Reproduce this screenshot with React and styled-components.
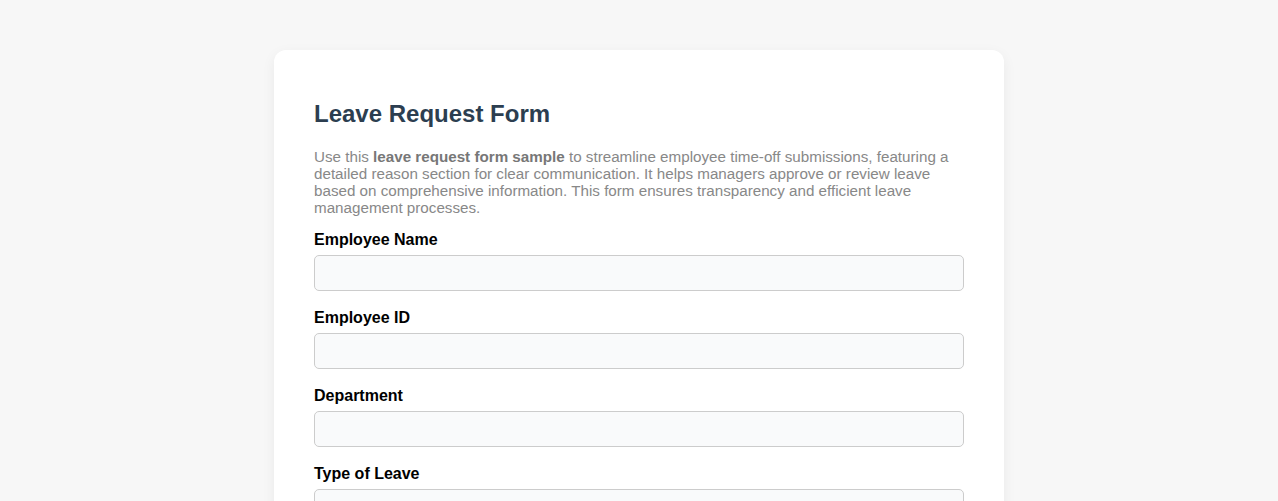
import React from "react";
import styled, { createGlobalStyle } from "styled-components";

const GlobalStyle = createGlobalStyle`
  body {
    margin: 0;
    background-color: #f7f7f7;
    font-family: "Liberation Sans", Arial, sans-serif;
  }
`;

function App() {
  return (
    <>
      <GlobalStyle />
      <Page>
        <FormCard>
          <FormTitle>Leave Request Form</FormTitle>
          <FormIntro>
            Use this <strong>leave request form sample</strong> to streamline
            employee time-off submissions, featuring a detailed reason section
            for clear communication. It helps managers approve or review leave
            based on comprehensive information. This form ensures transparency
            and efficient leave management processes.
          </FormIntro>

          <Field>
            <Label htmlFor="name">Employee Name</Label>
            <TextInput id="name" type="text" />
          </Field>
          <Field>
            <Label htmlFor="empid">Employee ID</Label>
            <TextInput id="empid" type="text" />
          </Field>
          <Field>
            <Label htmlFor="dept">Department</Label>
            <TextInput id="dept" type="text" />
          </Field>
          <Field>
            <Label htmlFor="type">Type of Leave</Label>
            <SelectInput id="type" defaultValue="">
              <option value=""></option>
              <option>Annual Leave</option>
              <option>Sick Leave</option>
              <option>Personal Leave</option>
            </SelectInput>
          </Field>
        </FormCard>
      </Page>
    </>
  );
}

export default App;

const Page = styled.div`
  padding: 50px 0 40px;
  display: flex;
  justify-content: center;
`;

const FormCard = styled.div`
  width: 730px;
  box-sizing: border-box;
  padding: 50px 40px 40px;
  background-color: #ffffff;
  border-radius: 12px;
  box-shadow: 0 4px 14px rgba(0, 0, 0, 0.06);
`;

const FormTitle = styled.h1`
  margin: 0 0 20px;
  font-size: 24px;
  line-height: 28px;
  font-weight: bold;
  color: #2c3e50;
`;

const FormIntro = styled.p`
  margin: 0 0 15px;
  font-size: 15.2px;
  line-height: 17px;
  color: #888888;

  strong {
    color: #777777;
  }
`;

const Field = styled.div`
  display: flex;
  flex-direction: column;
  margin-bottom: 18px;
`;

const Label = styled.label`
  font-size: 16px;
  line-height: 18px;
  font-weight: bold;
  color: #000000;
  margin-bottom: 6px;
`;

const TextInput = styled.input`
  width: 100%;
  height: 36px;
  box-sizing: border-box;
  padding: 8px 10px;
  border: 1px solid #cccccc;
  border-radius: 5px;
  background-color: #f9fafb;
  font-family: inherit;
  font-size: 15px;
`;

const SelectInput = styled.select`
  width: 100%;
  height: 36px;
  box-sizing: border-box;
  padding: 8px 10px;
  border: 1px solid #cccccc;
  border-radius: 5px;
  background-color: #f9fafb;
  font-family: inherit;
  font-size: 15px;
  appearance: none;
`;
